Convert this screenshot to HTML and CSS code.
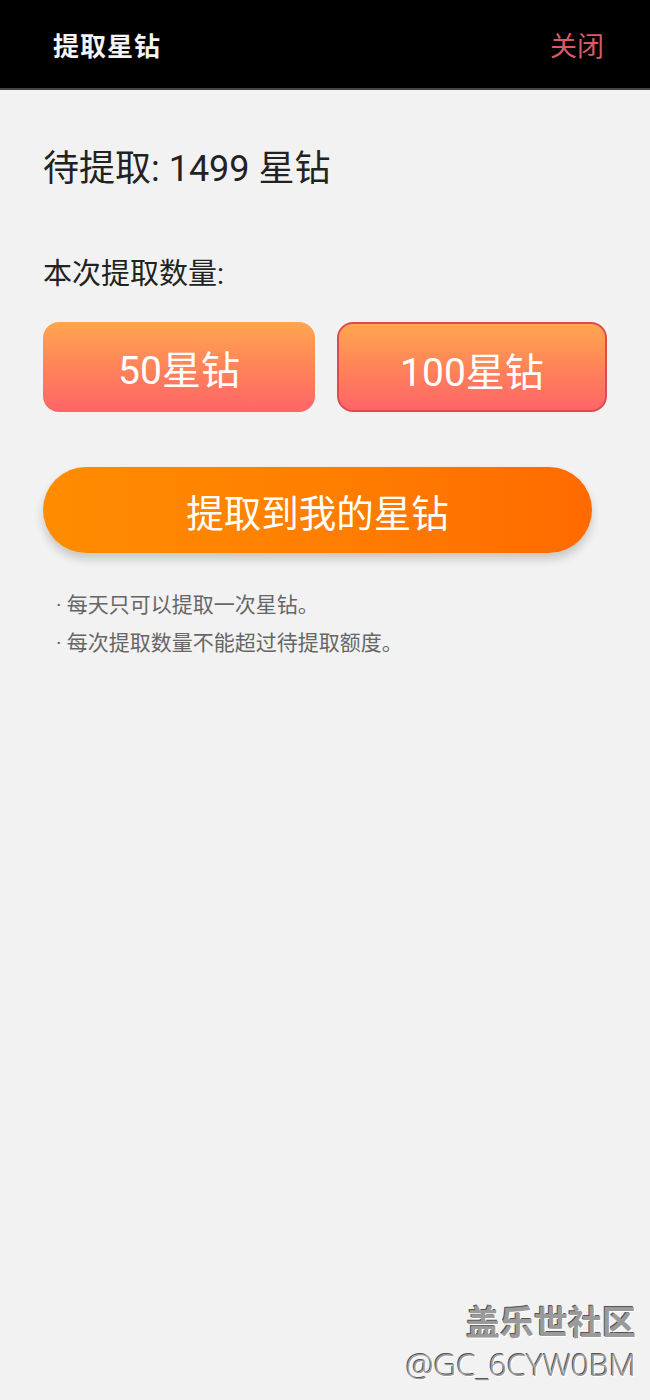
FILE: index.html
```html
<!DOCTYPE html>
<html lang="zh">
<head>
<meta charset="utf-8">
<link rel="stylesheet" href="styles.css">
</head>
<body>
<header class="topbar">
  <span class="topbar-title">提取星钻</span>
  <span class="topbar-close">关闭</span>
</header>
<main class="content">
  <div class="pending">待提取: 1499 星钻</div>
  <div class="label">本次提取数量:</div>
  <div class="options">
    <button class="opt">50星钻</button>
    <button class="opt opt-selected">100星钻</button>
  </div>
  <button class="submit">提取到我的星钻</button>
  <ul class="notes">
    <li>· 每天只可以提取一次星钻。</li>
    <li>· 每次提取数量不能超过待提取额度。</li>
  </ul>
</main>
<div class="watermark">
  <div class="wm-1">盖乐世社区</div>
  <div class="wm-2">@GC_6CYW0BM</div>
</div>
</body>
</html>
```

FILE: styles.css
```css
html, body {
  margin: 0;
  padding: 0;
}
body {
  width: 650px;
  height: 1400px;
  background: #f2f2f2;
  font-family: Roboto, "Noto Sans CJK SC", sans-serif;
  position: relative;
  overflow: hidden;
}
.topbar {
  height: 88px;
  background: #000;
  border-bottom: 2px solid #444;
  display: flex;
  align-items: center;
  justify-content: space-between;
  padding: 0 46px 0 53px;
  font-family: "Noto Sans CJK SC", sans-serif;
}
.topbar-title {
  color: #f4f4f4;
  font-size: 26px;
  font-weight: 700;
  letter-spacing: 1px;
}
.topbar-close {
  color: #d85a68;
  font-size: 27px;
}
.content {
  padding: 56px 43px 0 43px;
}
.pending {
  font-size: 36px;
  color: #222;
  line-height: 46px;
}
.label {
  margin-top: 64px;
  font-size: 29px;
  color: #222;
  line-height: 36px;
}
.options {
  margin-top: 30px;
  display: flex;
  gap: 22px;
}
.opt {
  width: 272px;
  height: 90px;
  border: none;
  border-radius: 16px;
  background: linear-gradient(180deg, #ffa650 0%, #ff8458 50%, #ff6468 100%);
  color: #fff;
  font-family: inherit;
  font-size: 39px;
  padding: 0;
  box-sizing: border-box;
}
.opt-selected {
  width: 270px;
  border: 2px solid #de4a50;
  padding-top: 4px;
}
.submit {
  display: block;
  margin-top: 55px;
  width: 549px;
  height: 86px;
  border: none;
  border-radius: 43px;
  background: linear-gradient(90deg, #ff8c00 0%, #ff7f00 50%, #ff6a00 100%);
  box-shadow: 0 6px 10px rgba(0, 0, 0, 0.18);
  color: #fff;
  font-family: inherit;
  font-size: 37.5px;
  padding: 0;
}
.notes {
  list-style: none;
  margin: 33px 0 0 0;
  padding: 0 0 0 13px;
  color: #666;
  font-size: 21px;
  line-height: 38px;
}
.watermark {
  position: absolute;
  right: 14px;
  bottom: 16px;
  text-align: right;
  color: #9a9a9a;
  text-shadow: 1px 1px 0 #fff, -1px -1px 0 #555;
}
.wm-1 {
  font-family: "Noto Sans CJK SC", sans-serif;
  font-size: 34px;
  font-weight: 700;
  line-height: 46px;
}
.wm-2 {
  font-size: 31.5px;
  line-height: 40px;
  font-weight: 300;
  font-family: "Open Sans", "Noto Sans", sans-serif;
}
```
